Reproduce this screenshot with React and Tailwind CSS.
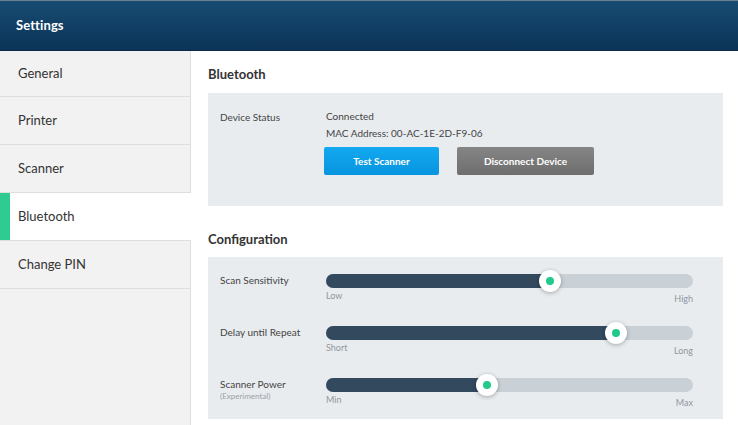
import React from 'react';

const navItems = ['General', 'Printer', 'Scanner', 'Bluetooth', 'Change PIN'];

const sliders = [
  { label: 'Scan Sensitivity', sub: null, value: 61, min: 'Low', max: 'High' },
  { label: 'Delay until Repeat', sub: null, value: 79, min: 'Short', max: 'Long' },
  { label: 'Scanner Power', sub: '(Experimental)', value: 44, min: 'Min', max: 'Max' },
];

const Slider = ({ value, min, max }) => (
  <div className="w-[367px]">
    <div className="relative h-[14px] rounded-full bg-[#c9d1d7]">
      <div
        className="absolute left-0 top-0 h-full rounded-full bg-[#33495e]"
        style={{ width: `${value}%` }}
      />
      <div
        className="absolute top-1/2 w-[22px] h-[22px] -ml-[11px] -mt-[11px] rounded-full bg-white shadow-[0_1px_4px_rgba(0,0,0,0.3)] flex items-center justify-center"
        style={{ left: `${value}%` }}
      >
        <div className="w-[8px] h-[8px] rounded-full bg-[#1fca8b]" />
      </div>
    </div>
    <div className="flex justify-between text-[9px] text-[#8f979e] mt-[2px] leading-[12px]">
      <span>{min}</span>
      <span className="mt-[3px]">{max}</span>
    </div>
  </div>
);

const App = () => {
  return (
    <div className="w-[738px] h-[425px] overflow-hidden bg-white flex flex-col font-['Lato','Open_Sans',sans-serif] text-[#333]">
      {/* Header */}
      <div className="h-[51px] shrink-0 border-t border-[#6d7f8c] bg-gradient-to-b from-[#174c72] to-[#0c3358] border-b border-b-[#0a2a48] flex items-center px-[16px]">
        <span className="text-white text-[13px] font-bold tracking-[0.1px]">Settings</span>
      </div>

      <div className="flex flex-1 min-h-0">
        {/* Sidebar */}
        <div className="w-[191px] shrink-0 bg-[#f2f2f2] border-r border-[#dedede]">
          {navItems.map((item, i) => {
            const active = item === 'Bluetooth';
            const height = i === 0 ? 'h-[46px]' : 'h-[48px]';
            return (
              <div
                key={item}
                className={
                  active
                    ? `relative ${height} flex items-center pl-[18px] text-[13px] text-[#333] bg-white border-b border-[#dedede] -mr-px`
                    : `${height} flex items-center pl-[18px] text-[13px] text-[#333] border-b border-[#dedede]`
                }
              >
                {active && <div className="absolute left-0 top-0 bottom-0 w-[10px] bg-[#2fcb90]" />}
                {item}
              </div>
            );
          })}
        </div>

        {/* Main */}
        <div className="flex-1 pl-[17px] pr-[15px] pt-[14px]">
          <h2 className="text-[13px] font-bold text-[#333] leading-[18px]">Bluetooth</h2>
          <div className="mt-[10px] h-[113px] bg-[#e9ecef] px-[12px] pt-[17px] flex text-[10px] text-[#444]">
            <div className="w-[106px]">Device Status</div>
            <div className="flex flex-col">
              <span className="leading-[13px]">Connected</span>
              <span className="leading-[13px] mt-[4px]">MAC Address: 00-AC-1E-2D-F9-06</span>
              <div className="flex gap-[18px] mt-[7px] -ml-[2px]">
                <button className="w-[115px] h-[28px] rounded-[2px] bg-gradient-to-b from-[#12a9f0] to-[#0894e0] text-white text-[10px] font-bold">
                  Test Scanner
                </button>
                <button className="w-[137px] h-[28px] rounded-[2px] bg-gradient-to-b from-[#858585] to-[#6e6e6e] text-white text-[10px] font-bold">
                  Disconnect Device
                </button>
              </div>
            </div>
          </div>

          <h2 className="mt-[24px] text-[13px] font-bold text-[#333] leading-[18px]">Configuration</h2>
          <div className="mt-[9px] bg-[#e9ecef] pl-[12px] pt-[17px] pb-[10px] flex flex-col gap-[21px]">
            {sliders.map((s) => (
              <div key={s.label} className="flex">
                <div className="w-[106px] flex flex-col text-[10px] text-[#444] leading-[12px]">
                  <span>{s.label}</span>
                  {s.sub && <span className="text-[8px] text-[#9aa1a7]">{s.sub}</span>}
                </div>
                <Slider value={s.value} min={s.min} max={s.max} />
              </div>
            ))}
          </div>
        </div>
      </div>
    </div>
  );
};

export default App;
